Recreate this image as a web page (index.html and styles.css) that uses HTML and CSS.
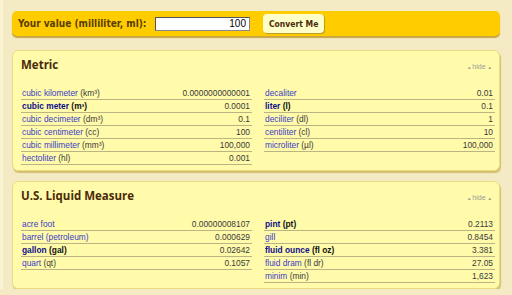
FILE: index.html
```html
<!DOCTYPE html>
<html lang="en">
<head>
    <meta charset="UTF-8">
    <meta name="viewport" content="width=device-width, initial-scale=1.0">
    <title>Milliliter conversion</title>
    <link rel="stylesheet" href="styles.css">
</head>
<body>
    <div class="page">
        <form class="value-bar" onsubmit="return false">
            <label class="value-label" for="value">Your value (milliliter, ml):</label>
            <input class="value-input" id="value" type="text" value="100">
            <button class="convert-button" type="button">Convert Me</button>
        </form>

        <div class="panel">
            <div class="panel-head">
                <h2>Metric</h2>
                <a class="hide-link" href="#"><span class="arrow">&#9650;</span>hide <span class="arrow">&#9650;</span></a>
            </div>
            <div class="panel-body">
                <table class="units">
                    <tr><td><a href="#">cubic kilometer</a> (km³)</td><td class="num">0.0000000000001</td></tr>
                    <tr class="main"><td><a href="#">cubic meter</a> (m³)</td><td class="num">0.0001</td></tr>
                    <tr><td><a href="#">cubic decimeter</a> (dm³)</td><td class="num">0.1</td></tr>
                    <tr><td><a href="#">cubic centimeter</a> (cc)</td><td class="num">100</td></tr>
                    <tr><td><a href="#">cubic millimeter</a> (mm³)</td><td class="num">100,000</td></tr>
                    <tr><td><a href="#">hectoliter</a> (hl)</td><td class="num">0.001</td></tr>
                </table>
                <table class="units">
                    <tr><td><a href="#">decaliter</a></td><td class="num">0.01</td></tr>
                    <tr class="main"><td><a href="#">liter</a> (l)</td><td class="num">0.1</td></tr>
                    <tr><td><a href="#">deciliter</a> (dl)</td><td class="num">1</td></tr>
                    <tr><td><a href="#">centiliter</a> (cl)</td><td class="num">10</td></tr>
                    <tr><td><a href="#">microliter</a> (µl)</td><td class="num">100,000</td></tr>
                </table>
            </div>
        </div>

        <div class="panel">
            <div class="panel-head">
                <h2>U.S. Liquid Measure</h2>
                <a class="hide-link" href="#"><span class="arrow">&#9650;</span>hide <span class="arrow">&#9650;</span></a>
            </div>
            <div class="panel-body">
                <table class="units">
                    <tr><td><a href="#">acre foot</a></td><td class="num">0.00000008107</td></tr>
                    <tr><td><a href="#">barrel (petroleum)</a></td><td class="num">0.000629</td></tr>
                    <tr class="main"><td><a href="#">gallon</a> (gal)</td><td class="num">0.02642</td></tr>
                    <tr><td><a href="#">quart</a> (qt)</td><td class="num">0.1057</td></tr>
                </table>
                <table class="units">
                    <tr class="main"><td><a href="#">pint</a> (pt)</td><td class="num">0.2113</td></tr>
                    <tr><td><a href="#">gill</a></td><td class="num">0.8454</td></tr>
                    <tr class="main"><td><a href="#">fluid ounce</a> (fl oz)</td><td class="num">3.381</td></tr>
                    <tr><td><a href="#">fluid dram</a> (fl dr)</td><td class="num">27.05</td></tr>
                    <tr><td><a href="#">minim</a> (min)</td><td class="num">1,623</td></tr>
                </table>
            </div>
        </div>
    </div>
</body>
</html>
```

FILE: styles.css
```css
body {
    margin: 0;
    background: #f4eac3;
    font-family: 'Liberation Sans', Arial, sans-serif;
    border-left: 3px solid #fbf4d2;
}

.page {
    padding: 11px 12px 0 9px;
}

.value-bar {
    display: flex;
    align-items: center;
    height: 25px;
    margin: 0;
    padding: 0 6px;
    background: #ffcc00;
    border-radius: 5px;
    box-shadow: 0 2px 1px #c9a540;
}

.value-label {
    font-family: 'DejaVu Sans Condensed', 'DejaVu Sans', sans-serif;
    font-weight: bold;
    font-size: 10px;
    color: #5a3f00;
    width: 137px;
}

.value-input {
    box-sizing: border-box;
    width: 95px;
    height: 14px;
    padding: 0 3px;
    border: 1px solid #8a8a8a;
    border-top-color: #555;
    border-left-color: #555;
    background: white;
    font-family: 'Liberation Sans', Arial, sans-serif;
    font-size: 10px;
    text-align: right;
    color: #000;
}

.convert-button {
    margin-left: 13px;
    height: 19px;
    padding: 0 6px;
    border: none;
    border-radius: 4px;
    background: #ffffc8;
    box-shadow: 1px 1px 1px #b89a30;
    font-family: 'DejaVu Sans Condensed', 'DejaVu Sans', sans-serif;
    font-weight: bold;
    font-size: 8.5px;
    color: #4a2a0a;
    cursor: pointer;
}

.panel {
    margin-top: 14px;
    padding: 0 6px 5px 8px;
    background: #fffbab;
    border: 1px solid #ecda84;
    border-radius: 6px;
    box-shadow: 1px 2px 1px #d2bf70;
}

.panel + .panel {
    margin-top: 10px;
}

.panel-head {
    display: flex;
    justify-content: space-between;
    align-items: baseline;
    height: 36px;
    padding-top: 2px;
    box-sizing: border-box;
}

.panel-head h2 {
    margin: 0;
    font-family: 'Open Sans', 'Noto Sans', sans-serif;
    font-weight: bold;
    font-size: 11.5px;
    line-height: 24px;
    color: #4a2a08;
}

.hide-link {
    font-size: 7px;
    color: #9a9a9a;
    text-decoration: none;
}

.hide-link .arrow {
    font-size: 4.5px;
    margin-right: 1px;
}

.panel-body {
    display: grid;
    grid-template-columns: 231px 231px;
    column-gap: 12px;
    align-items: start;
}

.units {
    width: 100%;
    border-collapse: collapse;
    font-size: 8.4px;
    color: #3a3a3a;
}

.units td {
    height: 12px;
    padding: 0 2px 0 1px;
    line-height: 12px;
    border-bottom: 1px solid #bab384;
    white-space: nowrap;
}

.units a {
    color: #3c3cc4;
    text-decoration: none;
}

.units .main td {
    font-weight: bold;
    color: #111;
}

.units .main a {
    color: #10108a;
}

.units .num {
    text-align: right;
    font-weight: normal;
}

.units .main .num {
    font-weight: normal;
    color: #3a3a3a;
}
```
